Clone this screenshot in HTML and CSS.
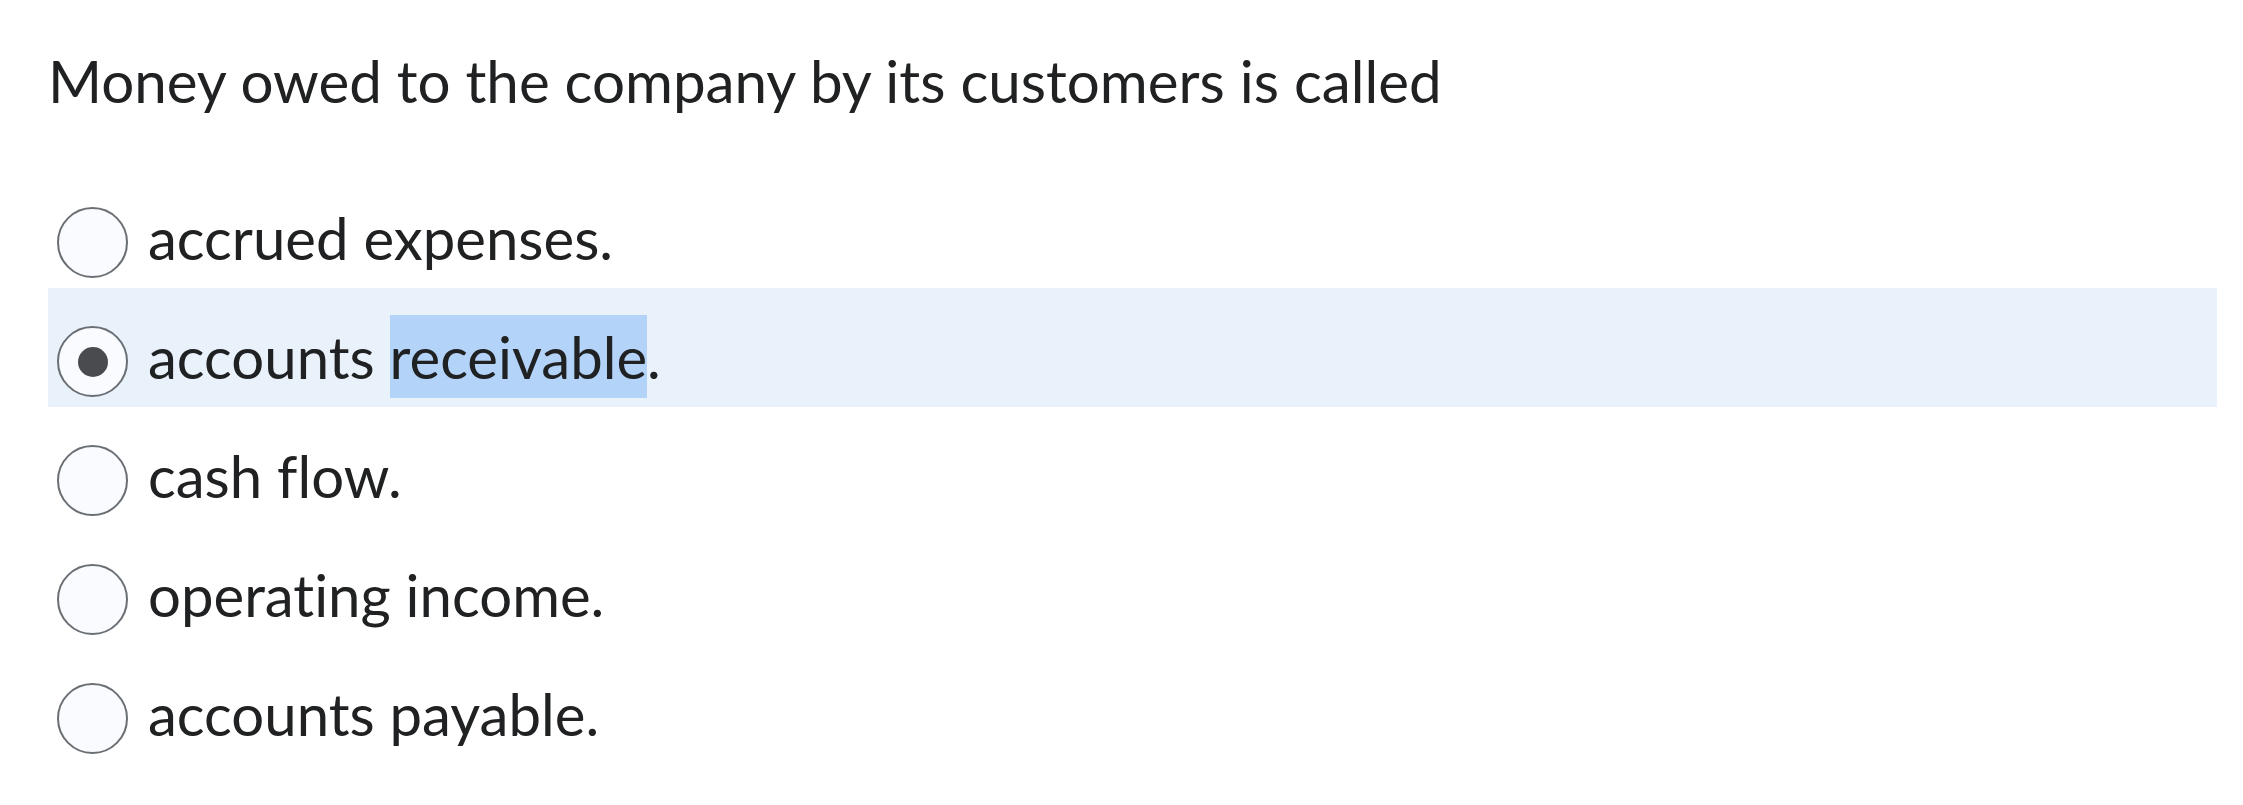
FILE: index.html
```html
<!DOCTYPE html>
<html lang="en">
<head>
<meta charset="utf-8">
<title>Question</title>
<link rel="stylesheet" href="styles.css">
</head>
<body>
<div class="quiz">
  <h1 class="question">Money owed to the company by its customers is called</h1>
  <div class="options">
    <div class="option">
      <span class="radio"></span>
      <span class="label">accrued expenses.</span>
    </div>
    <div class="option option-selected">
      <span class="radio radio-checked"></span>
      <span class="label">accounts <span class="sel">receivable</span>.</span>
    </div>
    <div class="option">
      <span class="radio"></span>
      <span class="label">cash flow.</span>
    </div>
    <div class="option">
      <span class="radio"></span>
      <span class="label">operating income.</span>
    </div>
    <div class="option">
      <span class="radio"></span>
      <span class="label">accounts payable.</span>
    </div>
  </div>
</div>
</body>
</html>
```

FILE: styles.css
```css
html, body {
  margin: 0;
  padding: 0;
  background: #ffffff;
}

body {
  font-family: Lato, "Open Sans", sans-serif;
  color: #202122;
  font-variant-ligatures: none;
  font-feature-settings: "liga" 0, "clig" 0;
}

.quiz {
  padding: 37px 26px 0 48px;
}

.question {
  margin: 0 0 45px 0;
  font-size: 58.3px;
  font-weight: 400;
  line-height: 87px;
}

.options {
  display: flex;
  flex-direction: column;
}

.option {
  display: flex;
  align-items: flex-start;
  height: 119px;
  box-sizing: border-box;
  padding: 27px 0 9px 9px;
}

.option-selected {
  background: #e9f1fb;
}

.radio {
  flex: none;
  width: 71px;
  height: 71px;
  box-sizing: border-box;
  margin-top: 11px;
  border: 2.5px solid #6a6f74;
  border-radius: 50%;
  background: #f9fbff;
  display: flex;
  align-items: center;
  justify-content: center;
}

.radio-checked::after {
  content: "";
  width: 30px;
  height: 30px;
  border-radius: 50%;
  background: #4a4b4e;
}

.label {
  margin-left: 20px;
  font-size: 58.1px;
  line-height: 83px;
  white-space: nowrap;
}

.sel {
  display: inline-block;
  background: #b4d3f9;
}
```
